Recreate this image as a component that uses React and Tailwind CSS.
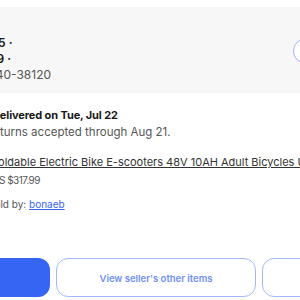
import React from "react";

export default function App() {
  return (
    <div
      className="w-[300px] h-[300px] overflow-hidden bg-white text-[#191919]"
      style={{ fontFamily: "Inter, 'Open Sans', sans-serif" }}
    >
      <div className="pt-[7px]">
        {/* Order summary band */}
        <div className="h-[86px] bg-[#f7f7f7] flex items-center justify-between -ml-[96px]">
          <div className="self-start flex flex-col text-[12px] leading-[16px] pt-[28px]">
            <span className="font-semibold">Order date: Jul 15 ·</span>
            <span className="font-semibold">Total: US $317.99 ·</span>
            <span className="text-[#555]">Order no. 12-13140-38120</span>
          </div>
          <button
            type="button"
            className="w-[120px] h-[26px] mt-[2px] -mr-[113px] rounded-full border-[1.5px] border-[#9fb4fa] bg-white shrink-0"
          />
        </div>

        {/* Delivery + item */}
        <div className="pt-[13px] -ml-[8px]">
          <p className="text-[11px] leading-[18px] font-bold tracking-[-0.01em]">
            Delivered on Tue, Jul 22
          </p>
          <p className="-ml-[6px] text-[11.5px] leading-[16px] text-[#555]">
            Returns accepted through Aug 21.
          </p>
          <p className="mt-[14px] text-[11px] leading-[16px] text-[#333] underline whitespace-nowrap">
            Foldable Electric Bike E-scooters 48V 10AH Adult Bicycles USA
          </p>
          <p className="mt-[2px] text-[10px] leading-[16px] text-[#555] tracking-[-0.05em]">
            US $317.99
          </p>
          <p className="mt-[8px] -ml-[4px] text-[10px] leading-[16px] text-[#555]">
            Sold by:{" "}
            <a href="#" className="text-[#3665f3] underline">
              bonaeb
            </a>
          </p>
        </div>

        {/* Action buttons */}
        <div className="mt-[46px] flex gap-[6px] -ml-[150px]">
          <button
            type="button"
            className="w-[200px] h-[39px] shrink-0 rounded-[12px] bg-[#3665f3] text-white text-[12px] font-semibold"
          >
            Return this item
          </button>
          <button
            type="button"
            className="w-[200px] h-[39px] pt-[4px] shrink-0 rounded-[12px] border-[1.5px] border-[#a5b8fa] bg-white text-[#6f8ff5] text-[9.5px] font-semibold"
          >
            View seller's other items
          </button>
          <button
            type="button"
            className="w-[200px] h-[39px] pt-[4px] shrink-0 rounded-[12px] border-[1.5px] border-[#a5b8fa] bg-white text-[#6f8ff5] text-[9.5px] font-semibold"
          >
            Contact seller
          </button>
        </div>
      </div>
    </div>
  );
}
